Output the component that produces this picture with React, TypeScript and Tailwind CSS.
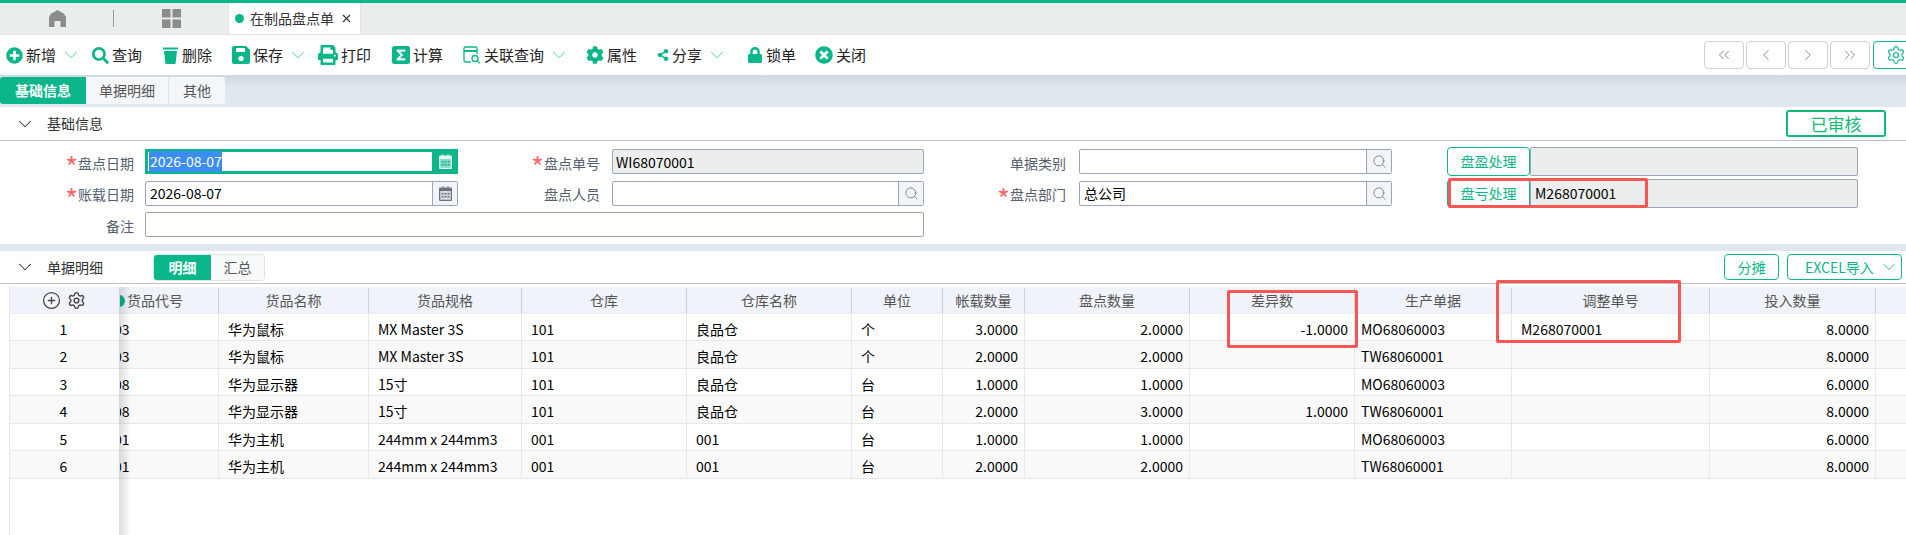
import type { ReactNode } from "react";
import { ChevronDown, ChevronLeft, ChevronRight, ChevronsLeft, ChevronsRight, CirclePlus, Search, Settings, X } from "lucide-react";
import { FaCog, FaLock, FaPlusCircle, FaPrint, FaSearch, FaShareAlt, FaTimesCircle } from "react-icons/fa";

const SigmaIcon = () => (
  <svg viewBox="0 0 18 18" className="h-[18px] w-[18px]">
    <rect x="0" y="0" width="18" height="18" rx="2.5" fill="#0cb68b" />
    <path d="M13 5V4H5v1.2L9 9l-4 3.8V14h8v-1.2H7.4L10.8 9 7.4 5.2H13z" fill="#fff" stroke="#fff" strokeWidth="0.8" />
  </svg>
);

const WindowSearchIcon = () => (
  <svg viewBox="0 0 18 18" className="h-[18px] w-[18px]" fill="none" stroke="#0cb68b" strokeWidth="1.3">
    <path d="M8 16H2.5A1.5 1.5 0 0 1 1 14.5v-12A1.5 1.5 0 0 1 2.5 1h10A1.5 1.5 0 0 1 14 2.5V8" />
    <path d="M1 5h13" strokeWidth="2" />
    <circle cx="12" cy="12.5" r="3" />
    <path d="M14.2 14.7 17 17.4" />
  </svg>
);

const TrashIcon = () => (
  <svg viewBox="0 0 17 18" className="h-[18px] w-[17px]" fill="currentColor">
    <path d="M1 1.5h15V3.5H1z" />
    <path d="M2 5h13l-1.3 12a1 1 0 0 1-1 1H4.3a1 1 0 0 1-1-1z" />
  </svg>
);

const SaveIcon = () => (
  <svg viewBox="0 0 18 18" className="h-[18px] w-[18px]">
    <path d="M2 0h12l4 4v12a2 2 0 0 1-2 2H2a2 2 0 0 1-2-2V2a2 2 0 0 1 2-2z" fill="currentColor" />
    <rect x="4" y="2" width="9" height="4" fill="#fff" />
    <circle cx="9" cy="12.5" r="2.6" fill="#fff" />
  </svg>
);

const CalendarIcon = ({ active }: { active?: boolean }) => (
  <svg viewBox="0 0 13 15" className="h-[15px] w-[13px]" fill="currentColor">
    <path d="M1 1.5h2.500V0h1v1.500h4V0h1v1.500H12a1 1 0 0 1 1 1V14a1 1 0 0 1-1 1H1a1 1 0 0 1-1-1V2.500a1 1 0 0 1 1-1z" />
    <rect x="1.2" y="5" width="10.600" height="8.800" fill={active ? "#0cb68b" : "#fff"} opacity={active ? 0.45 : 0.72} />
    <path
      d="M2.500 7h2v1.500h-2zM5.500 7h2v1.500h-2zM8.500 7h2v1.500h-2zM2.500 10h2v1.500h-2zM5.500 10h2v1.500h-2zM8.500 10h2v1.500h-2z"
      fill={active ? "#0cb68b" : "currentColor"}
    />
  </svg>
);

const toolbarItems: { label: string; icon: ReactNode; menu?: boolean; width: string }[] = [
  { label: "新增", icon: <FaPlusCircle size={17} />, menu: true, width: "w-[86px]" },
  { label: "查询", icon: <FaSearch size={17} />, width: "w-[70px]" },
  { label: "删除", icon: <TrashIcon />, width: "w-[70px]" },
  { label: "保存", icon: <SaveIcon />, menu: true, width: "w-[86px]" },
  { label: "打印", icon: <FaPrint size={20} />, width: "w-[74px]" },
  { label: "计算", icon: <SigmaIcon />, width: "w-[71px]" },
  { label: "关联查询", icon: <WindowSearchIcon />, menu: true, width: "w-[123px]" },
  { label: "属性", icon: <FaCog size={18} />, width: "w-[71px]" },
  { label: "分享", icon: <FaShareAlt size={12} />, menu: true, width: "w-[90px]" },
  { label: "锁单", icon: <FaLock size={16} />, width: "w-[68px]" },
  { label: "关闭", icon: <FaTimesCircle size={18} />, width: "w-[70px]" },
];

const gridCols =
  "grid grid-cols-[110px_99px_150px_153px_165px_165px_91px_82px_165px_165px_157px_198px_166px_31px]";

const headers = ["货品代号", "货品名称", "货品规格", "仓库", "仓库名称", "单位", "帐载数量", "盘点数量", "差异数", "生产单据", "调整单号", "投入数量", ""];

const rows = [
  { code: "03", name: "华为鼠标", spec: "MX Master 3S", wh: "101", whName: "良品仓", unit: "个", book: "3.0000", count: "2.0000", diff: "-1.0000", order: "MO68060003", adj: "M268070001", input: "8.0000", h: "h-[27px]" },
  { code: "03", name: "华为鼠标", spec: "MX Master 3S", wh: "101", whName: "良品仓", unit: "个", book: "2.0000", count: "2.0000", diff: "", order: "TW68060001", adj: "", input: "8.0000", h: "h-[28px]" },
  { code: "08", name: "华为显示器", spec: "15寸", wh: "101", whName: "良品仓", unit: "台", book: "1.0000", count: "1.0000", diff: "", order: "MO68060003", adj: "", input: "6.0000", h: "h-[27px]" },
  { code: "08", name: "华为显示器", spec: "15寸", wh: "101", whName: "良品仓", unit: "台", book: "2.0000", count: "3.0000", diff: "1.0000", order: "TW68060001", adj: "", input: "8.0000", h: "h-[28px]" },
  { code: "01", name: "华为主机", spec: "244mm x 244mm3", wh: "001", whName: "001", unit: "台", book: "1.0000", count: "1.0000", diff: "", order: "MO68060003", adj: "", input: "6.0000", h: "h-[27px]" },
  { code: "01", name: "华为主机", spec: "244mm x 244mm3", wh: "001", whName: "001", unit: "台", book: "2.0000", count: "2.0000", diff: "", order: "TW68060001", adj: "", input: "8.0000", h: "h-[28px]" },
];

function FieldLabel({ text, required, width }: { text: string; required?: boolean; width: string }) {
  return (
    <div className={`${width} flex shrink-0 items-center justify-end pt-[3px] text-[#55606e]`}>
      {required && <span className="-mt-[3px] h-[25px] text-[28px] leading-[34px] text-[#f96a6a]">*</span>}
      <span>{text}</span>
    </div>
  );
}

function LookupButton({ calendar }: { calendar?: boolean }) {
  return (
    <div className="flex w-[25px] shrink-0 items-center justify-center self-stretch border-l border-[#9aa5bd] bg-[#f2f4f8] text-[#6b7280]">
      {calendar ? <CalendarIcon /> : <Search size={15} strokeWidth={1.3} />}
    </div>
  );
}

function NavButton({ children }: { children: ReactNode }) {
  return (
    <div className="flex h-[28px] w-[40px] items-center justify-center rounded-[4px] border border-[#d0d0d0] text-[#777]">
      {children}
    </div>
  );
}

function Cell({ children, right, center, className = "" }: { children?: ReactNode; right?: boolean; center?: boolean; className?: string }) {
  return (
    <div
      className={`flex items-center overflow-hidden border-r border-[#e8e8e8] pt-[4px] ${
        right ? "justify-end pr-[6px]" : center ? "justify-center" : "pl-[9px]"
      } ${className}`}
    >
      {children}
    </div>
  );
}

export default function App() {
  return (
    <div className="relative flex h-[535px] w-[1906px] flex-col overflow-hidden bg-white text-[14px] text-black font-['Noto_Sans_CJK_SC','Noto_Sans',sans-serif]">
      {/* top tabs */}
      <div className="h-[3px] bg-[#0cb68b]" />
      <div className="flex h-[32px] items-stretch border-b border-[#dfe5e5] bg-[#e9eeec]">
        <div className="flex w-[113px] items-center justify-center pl-[1px] text-[#8c8c8c]">
          <svg viewBox="0 0 17 17" className="h-[17px] w-[17px]" fill="currentColor">
            <path d="M8.500 0 15 3.800 17 7v10h-5.500v-6h-6v6H0V7l2-3.200z" />
          </svg>
        </div>
        <div className="my-[7px] w-px bg-[#999]" />
        <div className="flex w-[114px] items-center justify-center text-[#8c8c8c]">
          <svg viewBox="0 0 19 19" className="h-[19px] w-[19px]" fill="currentColor">
            <rect width="8.5" height="8.5" />
            <rect x="10.5" width="8.5" height="8.5" />
            <rect y="10.5" width="8.5" height="8.5" />
            <rect x="10.5" y="10.5" width="8.5" height="8.5" />
          </svg>
        </div>
        <div className="flex w-[133px] items-center border-x border-[#dfe5e5] bg-white pl-[6px] text-[#333]">
          <span className="mr-[6px] h-[9px] w-[9px] rounded-full bg-[#0cb68b]" />
          <span>在制品盘点单</span>
          <X size={13} className="ml-[6px]" strokeWidth={2} />
        </div>
      </div>

      {/* toolbar */}
      <div className="flex h-[40px] items-center bg-white pl-[6px]">
        {toolbarItems.map((item) => (
          <div key={item.label} className={`flex shrink-0 items-center ${item.width}`}>
            <span className="flex items-center text-[#0cb68b]">{item.icon}</span>
            <span className="ml-[3px] text-[15px] text-[#222]">{item.label}</span>
            {item.menu && <ChevronDown size={22} strokeWidth={1} className="ml-[4px] text-[#3cc8a4]" />}
          </div>
        ))}
        <div className="ml-auto flex items-center gap-[2px]">
          <NavButton><ChevronsLeft size={18} strokeWidth={1.1} /></NavButton>
          <NavButton><ChevronLeft size={18} strokeWidth={1.1} /></NavButton>
          <NavButton><ChevronRight size={18} strokeWidth={1.1} /></NavButton>
          <NavButton><ChevronsRight size={18} strokeWidth={1.1} /></NavButton>
          <div className="-mr-[8px] ml-[1px] flex h-[28px] w-[41px] items-center rounded-[4px] border border-[#0cb68b] pl-[12px] text-[#0cb68b]">
            <Settings size={20} strokeWidth={1.4} />
          </div>
        </div>
      </div>

      {/* page tabs */}
      <div className="flex h-[32px] items-start bg-gradient-to-b from-[#d0d7e0] to-[#e1e7ef] to-40% pt-[2px]">
        <div className="flex h-[27px] w-[86px] items-center justify-center rounded-l-[3px] bg-[#0cb68b] font-bold text-white">基础信息</div>
        <div className="flex h-[27px] w-[83px] items-center justify-center border-r border-[#dde3ea] bg-[#f4f7fa] text-[#555]">单据明细</div>
        <div className="flex h-[27px] w-[56px] items-center justify-center rounded-r-[3px] bg-[#f4f7fa] text-[#555]">其他</div>
      </div>

      {/* section: base info */}
      <div className="flex h-[34px] items-center border-b border-[#c0c0c0] pl-[14px]">
        <ChevronDown size={22} strokeWidth={1.1} className="text-[#333]" />
        <span className="ml-[11px] text-[#333]">基础信息</span>
        <div className="ml-auto mr-[20px] flex h-[27px] w-[100px] items-center justify-center rounded-[3px] border-2 border-[#10bb78] text-[17px] text-[#10bb78]">已审核</div>
      </div>

      <div className="flex flex-col gap-[6.5px] pt-[8px] pb-[7px]">
        <div className="flex h-[25px] items-center">
          <FieldLabel text="盘点日期" required width="w-[134px]" />
          <div className="ml-[11px] flex h-[25px] w-[313px] items-stretch border-[3px] border-r-0 border-[#0cb68b]">
            <div className="flex flex-1 items-center pl-[1px]">
              <span className="bg-[#3b8df0] pl-[1px] text-white">2026-08-07</span>
            </div>
            <div className="flex w-[26px] items-center justify-center bg-[#0cb68b] text-[#e6f7f2]"><CalendarIcon active /></div>
          </div>
          <FieldLabel text="盘点单号" required width="w-[142px]" />
          <div className="ml-[12px] flex h-[25px] w-[312px] items-center rounded-[2px] border border-[#9aa5bd] bg-[#eceeee] pl-[3px] pt-[1px]">WI68070001</div>
          <FieldLabel text="单据类别" width="w-[142px]" />
          <div className="ml-[13px] flex h-[25px] w-[313px] items-stretch rounded-[2px] border border-[#9aa5bd]">
            <div className="flex-1" />
            <LookupButton />
          </div>
          <div className="-my-[2px] ml-[55px] flex h-[29px] w-[83px] items-center justify-center rounded-[4px] border border-[#0cb68b] text-[#0cb68b]">盘盈处理</div>
          <div className="-my-[2px] flex h-[29px] w-[328px] items-center rounded-[2px] border border-[#9aa5bd] bg-[#eceeee]" />
        </div>
        <div className="flex h-[25px] items-center">
          <FieldLabel text="账载日期" required width="w-[134px]" />
          <div className="ml-[11px] flex h-[25px] w-[313px] items-stretch rounded-[2px] border border-[#9aa5bd]">
            <div className="flex flex-1 items-center pl-[4px] pt-[1px]">2026-08-07</div>
            <LookupButton calendar />
          </div>
          <FieldLabel text="盘点人员" width="w-[142px]" />
          <div className="ml-[12px] flex h-[25px] w-[312px] items-stretch rounded-[2px] border border-[#9aa5bd]">
            <div className="flex-1" />
            <LookupButton />
          </div>
          <FieldLabel text="盘点部门" required width="w-[142px]" />
          <div className="ml-[13px] flex h-[25px] w-[313px] items-stretch rounded-[2px] border border-[#9aa5bd]">
            <div className="flex flex-1 items-center pl-[4px] pt-[1px]">总公司</div>
            <LookupButton />
          </div>
          <div className="-my-[2px] ml-[55px] flex h-[29px] w-[83px] items-center justify-center rounded-[4px] border border-[#0cb68b] text-[#0cb68b]">盘亏处理</div>
          <div className="-my-[2px] flex h-[29px] w-[328px] items-center rounded-[2px] border border-[#9aa5bd] bg-[#eceeee] pl-[4px] pt-[1px]">M268070001</div>
        </div>
        <div className="flex h-[25px] items-center">
          <FieldLabel text="备注" width="w-[134px]" />
          <div className="ml-[11px] h-[25px] w-[779px] rounded-[2px] border border-[#9aa5bd]" />
        </div>
      </div>

      <div className="h-[7px] bg-[#e1e7ef]" />

      {/* section: detail */}
      <div className="flex h-[33px] items-center border-b border-[#c0c0c0] pl-[14px]">
        <ChevronDown size={22} strokeWidth={1.1} className="text-[#333]" />
        <span className="ml-[11px] text-[#333]">单据明细</span>
        <div className="ml-[50px] flex h-[27px] w-[112px] overflow-hidden rounded-[4px] border border-[#dde3ea]">
          <div className="flex w-[57px] items-center justify-center bg-[#0cb68b] font-bold text-white">明细</div>
          <div className="flex flex-1 items-center justify-center bg-[#f8fafb] text-[#555]">汇总</div>
        </div>
        <div className="ml-auto flex h-[26px] w-[55px] items-center justify-center rounded-[4px] border border-[#0cb68b] text-[#0cb68b]">分摊</div>
        <div className="ml-[8px] mr-[4px] flex h-[26px] w-[115px] items-center rounded-[4px] border border-[#0cb68b] pl-[17px] text-[#0cb68b]">
          EXCEL导入
          <ChevronDown size={20} strokeWidth={1.1} className="ml-[5px]" />
        </div>
      </div>

      {/* grid */}
      <div className="relative ml-[9px] mt-[3px] flex-1 border-l border-[#e8e8e8]">
        <div className={`${gridCols} h-[27px] border-b border-[#e8ebf0] bg-[#f0f3f9] pt-[1px] text-[#555]`}>
          <div className="flex items-center justify-center gap-[6px] pr-[3px] text-[#444]">
            <CirclePlus size={19} strokeWidth={1.6} />
            <Settings size={19} strokeWidth={1.8} />
          </div>
          <div className="flex items-center overflow-hidden border-r border-[#c5cde0]">
            <span className="-ml-[7px] mr-[2px] h-[12px] w-[12px] shrink-0 rounded-full bg-[#0cb68b]" />
            <span>{headers[0]}</span>
          </div>
          {headers.slice(1).map((h, i) => (
            <div key={i} className="flex items-center justify-center border-r border-[#c5cde0]">{h}</div>
          ))}
        </div>
        {rows.map((r, i) => (
          <div key={i} className={`${gridCols} ${r.h} border-b border-[#e8e8e8] ${i % 2 ? "bg-[#f9f9f9]" : "bg-white"}`}>
            <Cell center className="border-r-0 pr-[3px]">{i + 1}</Cell>
            <div className="flex items-center overflow-hidden border-r border-[#e8e8e8] pt-[4px]">
              <span className="-ml-[6px]">{r.code}</span>
            </div>
            <Cell>{r.name}</Cell>
            <Cell>{r.spec}</Cell>
            <Cell>{r.wh}</Cell>
            <Cell>{r.whName}</Cell>
            <Cell>{r.unit}</Cell>
            <Cell right>{r.book}</Cell>
            <Cell right>{r.count}</Cell>
            <Cell right>{r.diff}</Cell>
            <Cell className="!pl-[6px]">{r.order}</Cell>
            <Cell>{r.adj}</Cell>
            <Cell right>{r.input}</Cell>
            <Cell />
          </div>
        ))}
        {/* frozen column shadow */}
        <div className="absolute bottom-0 left-[109px] top-0 w-[12px] bg-gradient-to-r from-[#00000022] to-transparent" />
      </div>

      {/* red annotation boxes */}
      <div className="absolute left-[1448px] top-[178px] h-[30px] w-[200px] rounded-[2px] border-[3px] border-[#f85555]" />
      <div className="absolute left-[1227px] top-[290px] h-[58px] w-[131px] rounded-[2px] border-[3px] border-[#f85555]" />
      <div className="absolute left-[1496px] top-[280px] h-[63px] w-[185px] rounded-[2px] border-[3px] border-[#f85555]" />
    </div>
  );
}
